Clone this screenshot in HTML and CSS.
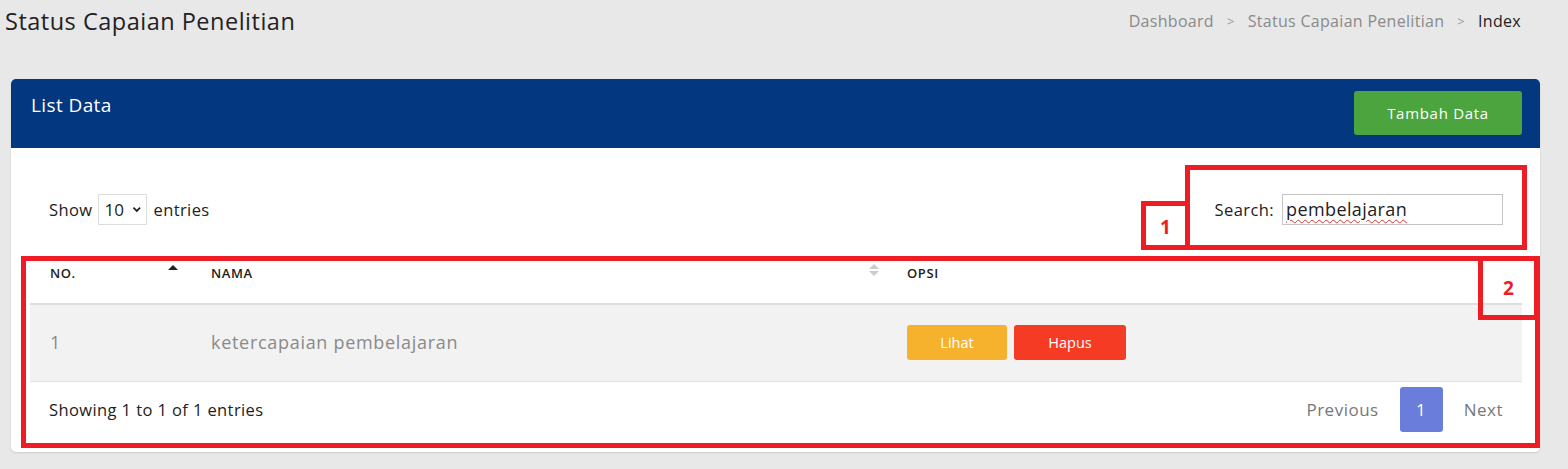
FILE: index.html
```html
<!DOCTYPE html>
<html>
<head>
<meta charset="utf-8">
<link rel="stylesheet" href="styles.css">
</head>
<body>
<div class="page">
  <div class="topbar">
    <h1 class="title">Status Capaian Penelitian</h1>
    <nav class="crumbs">
      <span class="crumb">Dashboard</span>
      <span class="sep">&gt;</span>
      <span class="crumb">Status Capaian Penelitian</span>
      <span class="sep">&gt;</span>
      <span class="crumb active">Index</span>
    </nav>
  </div>

  <div class="card">
    <div class="card-head">
      <div class="card-title">List Data</div>
      <button class="btn btn-green">Tambah Data</button>
    </div>
    <div class="card-body">
      <div class="controls">
        <div class="length">Show <span class="select">10 <svg width="10" height="7" viewBox="0 0 10 7"><path d="M1.5 1.5 L5 5 L8.5 1.5" fill="none" stroke="#222" stroke-width="1.8"/></svg></span> entries</div>
        <div class="search">Search: <span class="input"><span class="typed">pembelajaran</span></span></div>
      </div>
      <table class="tbl">
        <thead>
          <tr>
            <th class="c-no">NO.<span class="sort-up"></span></th>
            <th class="c-nama">NAMA<span class="sort-both"><i class="u"></i><i class="d"></i></span></th>
            <th class="c-opsi">OPSI</th>
          </tr>
        </thead>
        <tbody>
          <tr>
            <td class="c-no">1</td>
            <td class="c-nama">ketercapaian pembelajaran</td>
            <td class="c-opsi"><button class="btn btn-yellow">Lihat</button><button class="btn btn-red">Hapus</button></td>
          </tr>
        </tbody>
      </table>
      <div class="foot">
        <div class="info">Showing 1 to 1 of 1 entries</div>
        <div class="pager">
          <span class="pg">Previous</span>
          <span class="pg cur">1</span>
          <span class="pg">Next</span>
        </div>
      </div>
    </div>
  </div>

  <div class="mark box1"></div>
  <div class="mark tag1">1</div>
  <div class="mark box2"></div>
  <div class="mark tag2">2</div>
</div>
</body>
</html>
```

FILE: styles.css
```css
* { box-sizing: border-box; }
html, body { margin: 0; padding: 0; }
body {
  background: #e8e8e8;
  font-family: "Open Sans", "Noto Sans", sans-serif;
  color: #222;
  width: 1568px;
  height: 469px;
  overflow: hidden;
}
.page {
  position: relative;
  padding: 0 28px 0 11px;
}
.topbar {
  display: flex;
  justify-content: space-between;
  align-items: center;
  height: 42px;
  margin-left: -6px;
  margin-right: 19px;
}
.title {
  margin: 0;
  font-weight: 400;
  font-size: 23.5px;
  letter-spacing: 0.5px;
  color: #222;
}
.crumbs {
  display: flex;
  align-items: center;
  gap: 13px;
  font-size: 16px;
  letter-spacing: 0.3px;
  color: #8a8a8a;
}
.crumb.active { color: #222; }
.sep { color: #999; font-size: 13px; }

.card {
  margin-top: 37px;
  background: #fff;
  border-radius: 5px;
  box-shadow: 0 1px 2px rgba(0,0,0,0.12);
  overflow: hidden;
}
.card-head {
  background: #03377f;
  height: 69px;
  display: flex;
  justify-content: space-between;
  align-items: flex-start;
  padding: 12px 18px 0 20px;
}
.card-title {
  color: #fff;
  font-size: 19px;
  letter-spacing: 0.4px;
  padding-top: 1px;
}
.btn {
  border: none;
  color: #fff;
  font-family: inherit;
  border-radius: 3px;
  cursor: pointer;
}
.btn-green {
  background: #4ca43e;
  width: 168px;
  height: 44px;
  font-size: 15px;
  letter-spacing: 0.7px;
}
.card-body {
  padding: 0 18px 0 19px;
}
.controls {
  display: flex;
  justify-content: space-between;
  align-items: center;
  height: 110px;
  padding: 12px 19px 0 19px;
  font-size: 16.5px;
  letter-spacing: 0.4px;
}
.length { display: flex; align-items: center; gap: 6px; }
.select {
  display: inline-flex;
  align-items: center;
  gap: 8px;
  border: 1px solid #ddd;
  height: 31px;
  width: 49px;
  padding: 0 5px;
  font-size: 17px;
  letter-spacing: 0;
}
.search { display: flex; align-items: center; gap: 8px; }
.input {
  display: inline-flex;
  align-items: center;
  border: 1px solid #c4c4c4;
  width: 221px;
  height: 31px;
  padding: 0 3px;
  font-size: 18px;
  letter-spacing: 0.4px;
}
.typed {
  text-decoration: underline wavy #e03030;
  text-decoration-thickness: 1px;
  text-underline-offset: 3px;
}
.tbl {
  width: 100%;
  border-collapse: collapse;
}
.tbl th {
  text-align: left;
  font-size: 13px;
  letter-spacing: 0.6px;
  font-weight: 600;
  height: 46px;
  vertical-align: top;
  padding-top: 6px;
  border-bottom: 2px solid #dedede;
  position: relative;
}
.tbl td {
  height: 77px;
  background: #f2f2f2;
  border-bottom: 1px solid #e0e0e0;
  color: #8a8a8a;
  font-size: 18px;
  letter-spacing: 0.7px;
  padding-bottom: 2px;
}
.c-no { width: 161px; padding-left: 20px; }
.c-nama { width: 698px; padding-left: 20px; }
.c-opsi { padding-left: 18px; }
.sort-up {
  position: absolute;
  right: 13px;
  top: 7px;
  width: 0; height: 0;
  border-left: 5px solid transparent;
  border-right: 5px solid transparent;
  border-bottom: 5px solid #222;
}
.sort-both {
  position: absolute;
  right: 10px;
  top: 6px;
  display: flex;
  flex-direction: column;
  gap: 2px;
}
.sort-both .u, .sort-both .d {
  width: 0; height: 0;
  border-left: 5px solid transparent;
  border-right: 5px solid transparent;
}
.sort-both .u { border-bottom: 5px solid #ccc; }
.sort-both .d { border-top: 5px solid #ccc; }
.btn-yellow {
  background: #f7b22d;
  width: 100px;
  height: 35px;
  font-size: 14.5px;
  margin-right: 7px;
}
.btn-red {
  background: #f53b24;
  width: 112px;
  height: 35px;
  font-size: 14.5px;
}
.foot {
  display: flex;
  justify-content: space-between;
  align-items: center;
  height: 70px;
  padding: 0 19px 15px 19px;
  font-size: 16.5px;
  letter-spacing: 0.4px;
}
.pager { display: flex; align-items: center; gap: 0; }
.pg {
  color: #777;
  font-size: 17px;
  letter-spacing: 0.5px;
  padding: 0 21px;
}
.pg:last-child { padding-right: 0; }
.pg.cur {
  background: #6a7ddb;
  color: #fff;
  width: 43px;
  height: 45px;
  padding: 0;
  display: flex;
  align-items: center;
  justify-content: center;
  border-radius: 3px;
}

.mark {
  position: absolute;
  border: 5px solid #ee1c24;
}
.box1 { left: 1185px; top: 165px; width: 342px; height: 85px; }
.tag1 {
  left: 1141px; top: 201px; width: 49px; height: 49px;
  color: #ee1c24; font-weight: 700; font-size: 19px;
  display: flex; align-items: center; justify-content: center;
  padding-top: 2px;
}
.box2 { left: 21px; top: 256px; width: 1519px; height: 192px; }
.tag2 {
  left: 1478px; top: 261px; width: 61px; height: 59px;
  color: #ee1c24; font-weight: 700; font-size: 19px;
  display: flex; align-items: center; justify-content: center;
  border-top: none;
}
```
